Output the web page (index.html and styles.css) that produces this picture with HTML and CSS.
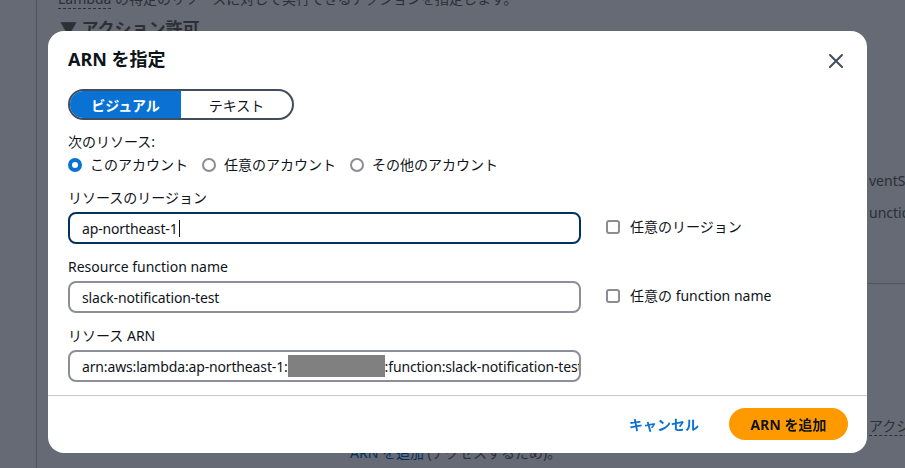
FILE: index.html
```html
<!DOCTYPE html>
<html lang="ja">
<head>
<meta charset="utf-8">
<title>ARN を指定</title>
<link rel="stylesheet" href="styles.css">
</head>
<body>
<div class="page">
  <div class="side"></div>
  <div class="main">
    <p class="desc"><span class="dotted">Lambda</span> の特定のリソースに対して実行できるアクションを指定します。</p>
    <h3 class="sec">▼ アクション許可</h3>
    <div class="bg-grid">
      <div class="bg-left"></div>
      <div class="bg-right">
        <div class="bg-t1">ventSource</div>
        <div class="bg-t2">unction</div>
        <div class="bg-line"></div>
        <div class="bg-t3"><span class="dotted">アクション</span></div>
      </div>
    </div>
    <div class="bg-foot"><span class="bg-link">ARN を追加</span> (アクセスするため)。</div>
  </div>
</div>

<div class="modal" role="dialog">
  <div class="m-head">
    <h2 class="m-title">ARN を指定</h2>
    <button class="m-close" aria-label="閉じる">
      <svg width="16" height="16" viewBox="0 0 16 16"><path d="M2 2 L14 14 M14 2 L2 14" stroke="#414d5c" stroke-width="2" fill="none" stroke-linecap="round"/></svg>
    </button>
  </div>
  <div class="m-body">
    <div class="seg">
      <span class="seg-item seg-on">ビジュアル</span>
      <span class="seg-item">テキスト</span>
    </div>
    <div class="lbl lbl-first">次のリソース:</div>
    <div class="radios">
      <label class="radio"><span class="rdot rdot-on"></span>このアカウント</label>
      <label class="radio"><span class="rdot"></span>任意のアカウント</label>
      <label class="radio"><span class="rdot"></span>その他のアカウント</label>
    </div>

    <div class="field">
      <div class="lbl">リソースのリージョン</div>
      <div class="frow">
        <div class="inp inp-focus">ap-northeast-1<span class="caret"></span></div>
        <label class="chk"><span class="cbox"></span>任意のリージョン</label>
      </div>
    </div>
    <div class="field">
      <div class="lbl">Resource function name</div>
      <div class="frow">
        <div class="inp">slack-notification-test</div>
        <label class="chk"><span class="cbox"></span>任意の function name</label>
      </div>
    </div>
    <div class="field">
      <div class="lbl">リソース ARN</div>
      <div class="frow">
        <div class="inp inp-clip"><span class="nowrap">arn:aws:lambda:ap-northeast-1:<span class="mask"></span>:function:slack-notification-test</span></div>
      </div>
    </div>
  </div>
  <div class="m-foot">
    <button class="btn-link">キャンセル</button>
    <button class="btn-primary">ARN を追加</button>
  </div>
</div>
</body>
</html>
```

FILE: styles.css
```css
* { box-sizing: border-box; }
html, body { margin: 0; padding: 0; }
body {
  width: 905px;
  height: 468px;
  overflow: hidden;
  background: #656a74;
  font-family: "Noto Sans", "Noto Sans CJK JP", sans-serif;
  font-size: 14px;
  color: #2b2f36;
}

/* dimmed background page */
.page {
  display: grid;
  grid-template-columns: 37px 1fr;
  height: 468px;
}
.side { border-right: 1px solid #50545d; }
.main { padding-left: 21px; display: flex; flex-direction: column; min-width: 0; }
.desc { margin: -11px 0 0; line-height: 20px; }
.dotted { border-bottom: 1px dashed #2b2f36; }
.sec { margin: 8px 0 0; font-size: 17px; font-weight: 700; line-height: 24px; padding-left: 2px; }
.bg-grid { display: grid; grid-template-columns: 810px 1fr; flex: 1; min-height: 0; }
.bg-right { padding-left: 1px; padding-top: 130px; display: flex; flex-direction: column; overflow: hidden; }
.bg-t1 { line-height: 20px; white-space: nowrap; }
.bg-t2 { line-height: 20px; margin-top: 12px; white-space: nowrap; }
.bg-line { border-top: 1px solid #50545d; margin: 60px 0 0 -1px; }
.bg-t3 { margin-top: 132px; line-height: 20px; white-space: nowrap; }
.bg-foot { padding-left: 292px; line-height: 20px; margin-bottom: 5px; }
.bg-link { color: #06305c; }

/* modal */
.modal {
  position: fixed;
  left: 48px;
  top: 31px;
  width: 819px;
  height: 422px;
  background: #fff;
  border-radius: 16px;
  display: flex;
  flex-direction: column;
  color: #0f141a;
}
.m-head {
  display: flex;
  justify-content: space-between;
  align-items: center;
  padding: 16px 22px 0 20px;
}
.m-title {
  margin: 0;
  font-size: 18px;
  font-weight: 700;
  line-height: 24px;
  color: #0f141a;
}
.m-close {
  border: 0;
  background: none;
  padding: 0;
  width: 18px;
  height: 18px;
  display: flex;
  align-items: center;
  justify-content: center;
  margin-top: 4px;
}
.m-body { padding: 18px 20px 0 20px; flex: 1; }

.seg {
  display: inline-flex;
  width: 226px;
  height: 31px;
  border: 2px solid #414d5c;
  border-radius: 16px;
  overflow: hidden;
}
.seg-item {
  display: flex;
  align-items: center;
  justify-content: center;
  font-size: 14px;
  color: #0f141a;
  width: 112px;
}
.seg-on {
  background: #0972d3;
  color: #fff;
  font-weight: 700;
  width: 112px;
}

.lbl { line-height: 20px; font-size: 14px; color: #0f141a; }
.lbl-first { margin-top: 12px; }
.radios { display: flex; gap: 14px; margin-top: 3px; line-height: 20px; }
.radio { display: flex; align-items: center; gap: 8px; }
.rdot {
  width: 14px; height: 14px;
  border-radius: 50%;
  border: 2px solid #8c8c94;
  background: #fff;
}
.rdot-on { border: 4px solid #0972d3; }

.field { margin-top: 13px; }
.frow { display: grid; grid-template-columns: 513px auto; column-gap: 25px; align-items: center; margin-top: 4px; }
.inp {
  height: 32px;
  border: 2px solid #8c8f97;
  border-radius: 8px;
  padding: 0 12px;
  display: flex;
  align-items: center;
  font-size: 14px;
  letter-spacing: -0.15px;
  color: #0f141a;
}
.inp-focus { border-color: #033160; }
.caret { display: inline-block; width: 1px; height: 17px; background: #0f141a; margin-left: 1px; }
.inp-clip { overflow: hidden; }
.nowrap { white-space: nowrap; display: inline-flex; align-items: center; }
.mask { display: inline-block; width: 97px; height: 22px; background: #808080; }
.chk { display: flex; align-items: center; gap: 10px; line-height: 20px; margin-top: -3px; }
.cbox {
  width: 14px; height: 14px;
  border: 2px solid #8c8c94;
  border-radius: 3px;
}

.m-foot {
  border-top: 1px solid #c6c6cd;
  display: flex;
  justify-content: flex-end;
  align-items: center;
  gap: 30px;
  padding: 12px 19px 13px 20px;
}
.btn-link {
  border: 0; background: none; padding: 0;
  font-family: inherit;
  font-size: 14px;
  font-weight: 700;
  color: #0972d3;
}
.btn-primary {
  border: 0;
  background: #ff9900;
  color: #0f141a;
  font-family: inherit;
  font-size: 14px;
  font-weight: 700;
  height: 32px;
  width: 119px;
  border-radius: 16px;
}
```
